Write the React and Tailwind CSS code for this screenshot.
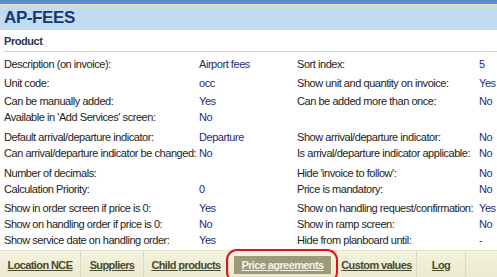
const ROWS = [
  { l1: 'Description (on invoice):', v1: 'Airport fees', l2: 'Sort index:', v2: '5', gap: 'mt-0', h: 'h-[19px]' },
  { l1: 'Unit code:', v1: 'occ', l2: 'Show unit and quantity on invoice:', v2: 'Yes', gap: 'mt-0', h: 'h-[20px]' },
  { l1: 'Can be manually added:', v1: 'Yes', l2: 'Can be added more than once:', v2: 'No', gap: 'mt-0', h: 'h-4' },
  { l1: "Available in 'Add Services' screen:", v1: 'No', l2: '', v2: '', gap: 'mt-0', h: 'h-4' },
  { l1: 'Default arrival/departure indicator:', v1: 'Departure', l2: 'Show arrival/departure indicator:', v2: 'No', gap: 'mt-1', h: 'h-4' },
  { l1: 'Can arrival/departure indicator be changed:', v1: 'No', l2: 'Is arrival/departure indicator applicable:', v2: 'No', gap: 'mt-0', h: 'h-4' },
  { l1: 'Number of decimals:', v1: '', l2: "Hide 'invoice to follow':", v2: 'No', gap: 'mt-1', h: 'h-4' },
  { l1: 'Calculation Priority:', v1: '0', l2: 'Price is mandatory:', v2: 'No', gap: 'mt-0', h: 'h-4' },
  { l1: 'Show in order screen if price is 0:', v1: 'Yes', l2: 'Show on handling request/confirmation:', v2: 'Yes', gap: 'mt-[3px]', h: 'h-4' },
  { l1: 'Show on handling order if price is 0:', v1: 'No', l2: 'Show in ramp screen:', v2: 'No', gap: 'mt-0', h: 'h-4' },
  { l1: 'Show service date on handling order:', v1: 'Yes', l2: 'Hide from planboard until:', v2: '-', gap: 'mt-0', h: 'h-4' },
];

const TABS = [
  { label: 'Location NCE', w: 'w-[81px]' },
  { label: 'Suppliers', w: 'w-[63px]' },
  { label: 'Child products', w: 'w-[85px]' },
  { label: 'Price agreements', w: 'w-[108px]', active: true },
  { label: 'Custom values', w: 'w-[80px]' },
  { label: 'Log', w: 'w-[49px]' },
];

function Row({ row }) {
  return (
    <div className={`grid grid-cols-[195px_98px_182px_1fr] items-center whitespace-nowrap ${row.gap} ${row.h}`}>
      <span className="text-[#222]">{row.l1}</span>
      <span className="text-[#1d2a7a]">{row.v1}</span>
      <span className="text-[#222]">{row.l2}</span>
      <span className="text-[#1d2a7a]">{row.v2}</span>
    </div>
  );
}

export default function App() {
  return (
    <div className="relative h-[277px] w-[497px] overflow-hidden bg-white font-['Liberation_Sans',sans-serif] text-[11px] leading-4 tracking-[-0.45px]">
      <div className="h-[4px] bg-[#5b8dd2]" />
      <div className="h-px bg-[#ece3b4]" />
      <div className="flex h-[25px] items-center bg-[#c1dcf0] pl-[4px]">
        <h1 className="text-[17px] font-bold tracking-[-0.4px] text-[#173a68]">AP-FEES</h1>
      </div>

      <div className="pl-[4px]">
        <div className="flex h-[22px] items-end border-b border-[#dcd8bc] pb-[2px]">
          <h2 className="text-[11px] font-bold text-[#2e3550]">Product</h2>
        </div>
        <div className="pt-[2px]">
          {ROWS.map((row) => <Row key={row.l1} row={row} />)}
        </div>
      </div>

      <div className="mt-[2px] flex h-[28px] items-center border-t border-[#e4e2c4] bg-gradient-to-b from-[#f4f3df] to-[#ebe9cd]">
        {TABS.map((tab) => (
          <div key={tab.label} className={`flex h-full items-center justify-center border-r border-[#dcdabc] tracking-[-0.6px] ${tab.w}`}>
            {tab.active ? (
              <span className="flex h-[18px] items-center bg-[#9b9b7b] px-[7px] font-bold text-[#f4f3e4] underline">{tab.label}</span>
            ) : (
              <span className="font-bold text-[#4a4a2c] underline">{tab.label}</span>
            )}
          </div>
        ))}
      </div>

      <div className="absolute left-[226px] top-[249px] h-[34px] w-[112px] rounded-[11px] border-2 border-[#e0141c]" />
    </div>
  );
}
